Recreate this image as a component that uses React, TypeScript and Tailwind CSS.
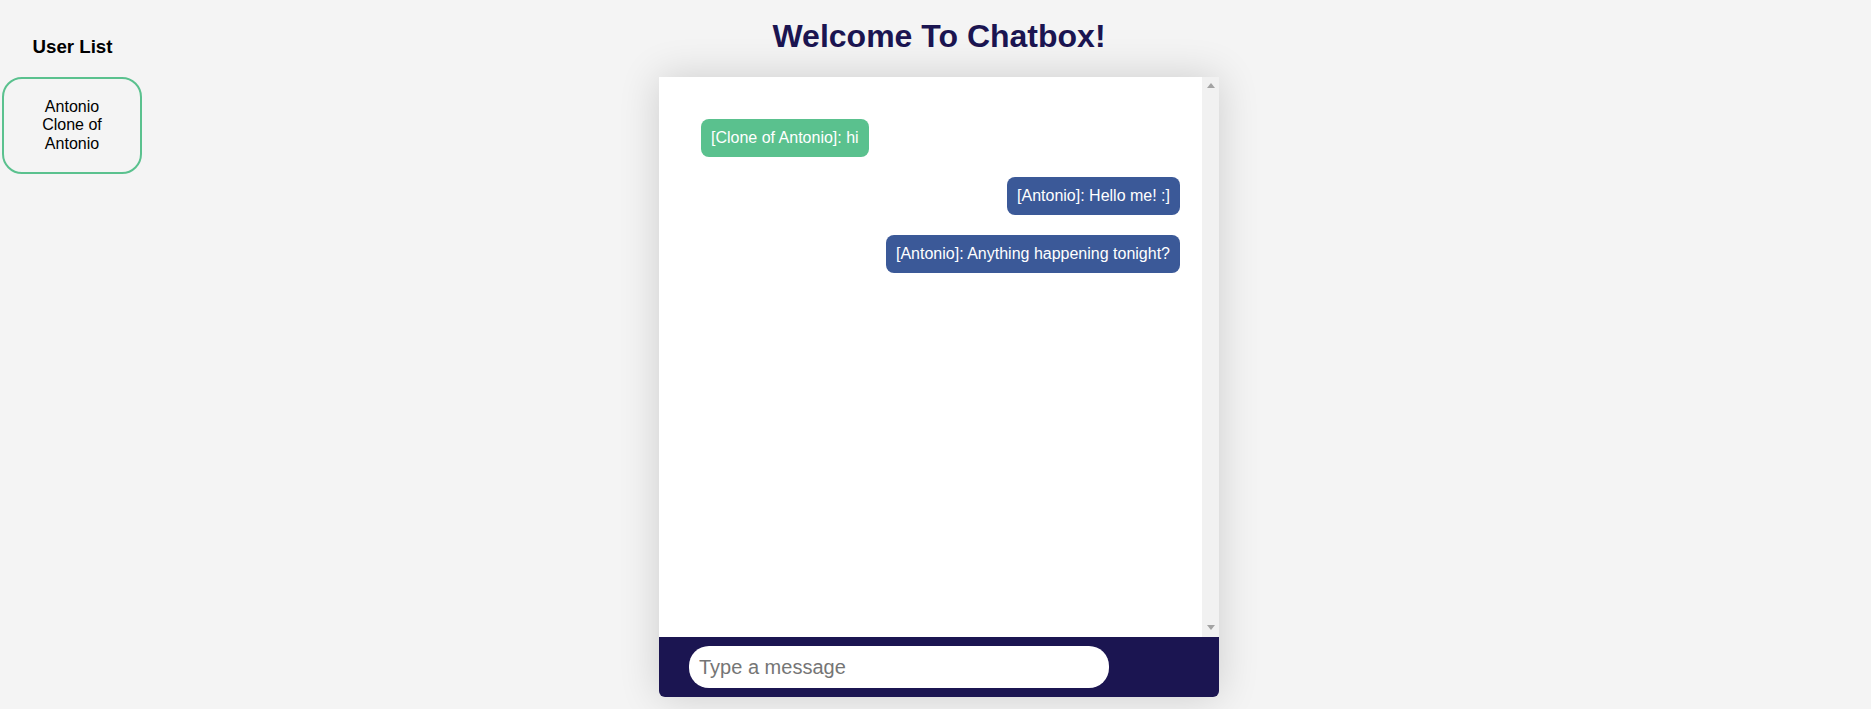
import React from "react";

export default function App() {
  const font = { fontFamily: '"Liberation Sans", Arial, sans-serif' };
  return (
    <div
      className="min-h-[709px] w-full bg-[#f4f4f4] grid grid-cols-[1fr_560px_1fr] pl-[7px]"
      style={font}
    >
      {/* Sidebar */}
      <div className="-ml-[7px]">
        <div className="w-[145px] flex flex-col">
          <h3 className="mt-[36px] text-center text-[18.72px] leading-[21.5px] font-bold text-black">
            User List
          </h3>
          <div className="mt-[19.5px] ml-[2px] w-[140px] h-[97px] rounded-[20px] border-2 border-[#5ac18e] flex flex-col items-center justify-center text-[16px] leading-[18.4px] text-black text-center">
            <div>Antonio</div>
            <div>Clone of</div>
            <div>Antonio</div>
          </div>
        </div>
      </div>

      {/* Main */}
      <div className="flex flex-col">
        <h1 className="mt-[18px] mb-[22px] text-center text-[32px] leading-[37px] font-bold text-[#1b1551]">
          Welcome To Chatbox!
        </h1>
        <div className="w-[560px] flex flex-col rounded-b-[6px] shadow-[0_0_40px_rgba(0,0,0,0.16)]">
          <div className="h-[560px] flex bg-white">
            <div className="flex-1 flex flex-col pt-[42px] pl-[42px] pr-[22px] gap-[20px]">
              <div className="self-start bg-[#5ac18e] text-white text-[16px] leading-[18px] px-[10px] py-[10px] rounded-[8px]">
                [Clone of Antonio]: hi
              </div>
              <div className="self-end bg-[#3b5998] text-white text-[16px] leading-[18px] px-[10px] py-[10px] rounded-[8px]">
                [Antonio]: Hello me! :]
              </div>
              <div className="self-end bg-[#3b5998] text-white text-[16px] leading-[18px] px-[10px] py-[10px] rounded-[8px]">
                [Antonio]: Anything happening tonight?
              </div>
            </div>
            <div className="w-[17px] bg-[#f1f1f1] flex flex-col items-center justify-between pt-[6px] pb-[7px]">
              <svg width="8" height="5" viewBox="0 0 8 5">
                <polygon points="4,0 8,5 0,5" fill="#a3a3a3" />
              </svg>
              <svg width="8" height="5" viewBox="0 0 8 5">
                <polygon points="0,0 8,0 4,5" fill="#a3a3a3" />
              </svg>
            </div>
          </div>
          <div className="h-[60px] bg-[#1b1551] rounded-b-[6px] flex items-center pl-[30px]">
            <input
              autoFocus
              type="text"
              placeholder="Type a message"
              className="w-[420px] h-[42px] rounded-[20px] bg-white pl-[10px] text-[20px] text-black placeholder:text-[#757575] outline-none border-0"
              style={font}
            />
          </div>
        </div>
      </div>

      <div />
    </div>
  );
}
